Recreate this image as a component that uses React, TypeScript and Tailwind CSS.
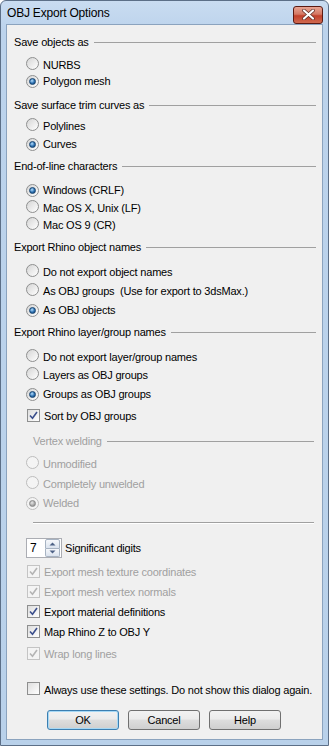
import React from 'react';

const font = { fontFamily: '"Liberation Sans", Arial, sans-serif' };

function Radio({ checked, disabled }: { checked?: boolean; disabled?: boolean }) {
  return (
    <span
      className={`inline-flex shrink-0 items-center justify-center w-[13px] h-[13px] rounded-full border ${
        disabled ? 'border-[#bdbdbd] bg-[#f4f4f4]' : 'border-[#8e8f8f] bg-[linear-gradient(135deg,#d5d5d5,#ffffff)]'
      }`}
    >
      {checked && (
        <span
          className={`w-[7px] h-[7px] rounded-full ${
            disabled
              ? 'bg-[radial-gradient(circle_at_40%_35%,#e8e8e8,#9a9a9a_70%)] border border-[#8a8a8a]'
              : 'bg-[radial-gradient(circle_at_40%_35%,#b7e0ff,#2a6fb0_55%,#123e6b)] border border-[#174470]'
          }`}
        />
      )}
    </span>
  );
}

function Check({ checked, disabled }: { checked?: boolean; disabled?: boolean }) {
  return (
    <span
      className={`inline-flex shrink-0 items-center justify-center w-[13px] h-[13px] border ${
        disabled ? 'border-[#c4c4c4] bg-[#f4f4f4]' : 'border-[#8e8f8f] bg-[linear-gradient(135deg,#dedede,#ffffff)]'
      }`}
    >
      {checked && (
        <svg width="9" height="9" viewBox="0 0 9 9">
          <path
            d="M1 4.5 L3.5 7.2 L8 1"
            fill="none"
            stroke={disabled ? '#b4b4b4' : '#3b4f8c'}
            strokeWidth="1.6"
          />
        </svg>
      )}
    </span>
  );
}

function Header({ text, mt, indent, disabled }: { text: string; mt: string; indent?: boolean; disabled?: boolean }) {
  return (
    <div className={`flex items-center h-[16px] ${mt} ${indent ? 'pl-[26px] pr-[8px]' : 'pl-[7px] pr-[6px]'}`}>
      <span className={disabled ? 'text-[#a0a0a0]' : 'text-black'}>{text}</span>
      <div className="flex-1 ml-[5px] h-px bg-[#a0a0a0]" />
    </div>
  );
}

function Row({
  label,
  mt,
  kind,
  checked,
  disabled,
}: {
  label: string;
  mt: string;
  kind: 'radio' | 'check';
  checked?: boolean;
  disabled?: boolean;
}) {
  return (
    <div className={`flex items-center h-[16px] pl-[19px] ${mt}`}>
      <span className={kind === 'check' ? 'ml-[1px]' : ''}>
        {kind === 'radio' ? <Radio checked={checked} disabled={disabled} /> : <Check checked={checked} disabled={disabled} />}
      </span>
      <span className={`ml-[4px] whitespace-pre ${disabled ? 'text-[#a0a0a0]' : 'text-black'}`}>{label}</span>
    </div>
  );
}

function Button({ label, primary }: { label: string; primary?: boolean }) {
  return (
    <div
      className={`flex items-center justify-center w-[72px] h-[20px] rounded-[3px] border ${
        primary ? 'border-[#3c7fb1] shadow-[inset_0_0_0_1px_#a6d8f5]' : 'border-[#707070]'
      } bg-[linear-gradient(#f2f2f2,#ebebeb_45%,#dddddd_50%,#cfcfcf)] text-black`}
    >
      {label}
    </div>
  );
}

export default function App() {
  return (
    <div className="w-[329px] h-[746px] bg-white" style={font}>
      <div className="w-[329px] h-[746px] flex flex-col rounded-t-[6px] border border-[#5c6f87] bg-[linear-gradient(#c9dcf1,#bcd3ec_30px,#b9d1ea)]">
        {/* title bar */}
        <div className="flex items-center h-[23px] shrink-0 pl-[6px] pr-[5px]">
          <span className="text-[12px] tracking-[-0.2px] text-black mt-[1px]">OBJ Export Options</span>
          <div className="flex-1" />
          <div className="flex items-center justify-center w-[30px] h-[18px] mt-[4px] rounded-[3px] border border-[#5b1a12] bg-[linear-gradient(#e8a493,#d47863_45%,#c2402a_55%,#d06a50)]">
            <svg width="13" height="11" viewBox="0 0 13 11">
              <path d="M2 1.5 L11 9.5 M11 1.5 L2 9.5" stroke="#5b2a22" strokeWidth="3.6" strokeLinecap="round" />
              <path d="M2 1.5 L11 9.5 M11 1.5 L2 9.5" stroke="#ffffff" strokeWidth="2.2" strokeLinecap="round" />
            </svg>
          </div>
        </div>
        {/* client area */}
        <div className="flex-1 mx-[5px] mb-[5px] border border-[#8ba3be] bg-[#f0f0f0] text-[11px] leading-[16px] tracking-[-0.2px]">
          <Header text="Save objects as" mt="mt-[9px]" />
          <Row kind="radio" label="NURBS" mt="mt-[7px]" />
          <Row kind="radio" label="Polygon mesh" mt="mt-[0px]" checked />
          <Header text="Save surface trim curves as" mt="mt-[8px]" />
          <Row kind="radio" label="Polylines" mt="mt-[5px]" />
          <Row kind="radio" label="Curves" mt="mt-[2px]" checked />
          <Header text="End-of-line characters" mt="mt-[6px]" />
          <Row kind="radio" label="Windows (CRLF)" mt="mt-[8px]" checked />
          <Row kind="radio" label="Mac OS X, Unix (LF)" mt="mt-[2px]" />
          <Row kind="radio" label="Mac OS 9 (CR)" mt="mt-[1px]" />
          <Header text="Export Rhino object names" mt="mt-[6px]" />
          <Row kind="radio" label="Do not export object names" mt="mt-[9px]" />
          <Row kind="radio" label="As OBJ groups  (Use for export to 3dsMax.)" mt="mt-[3px]" />
          <Row kind="radio" label="As OBJ objects" mt="mt-[3px]" checked />
          <Header text="Export Rhino layer/group names" mt="mt-[6px]" />
          <Row kind="radio" label="Do not export layer/group names" mt="mt-[9px]" />
          <Row kind="radio" label="Layers as OBJ groups" mt="mt-[2px]" />
          <Row kind="radio" label="Groups as OBJ groups" mt="mt-[3px]" checked />
          <Row kind="check" label="Sort by OBJ groups" mt="mt-[6px]" checked />
          <Header text="Vertex welding" mt="mt-[9px]" indent disabled />
          <Row kind="radio" label="Unmodified" mt="mt-[7px]" disabled />
          <Row kind="radio" label="Completely unwelded" mt="mt-[4px]" disabled />
          <Row kind="radio" label="Welded" mt="mt-[3px]" checked disabled />
          <div className="mt-[11px] ml-[26px] mr-[8px] h-[2px] border-t border-[#a0a0a0] border-b border-b-white" />
          {/* spinner */}
          <div className="flex items-center mt-[14px] pl-[19px] h-[20px]">
            <div className="flex items-center w-[36px] h-[20px] border border-[#abadb3] bg-white">
              <span className="flex-1 pl-[3px] text-[12px]">7</span>
              <div className="flex flex-col w-[15px] h-[18px] mr-px">
                <div className="flex-1 flex items-center justify-center border border-[#a7b3c2] rounded-t-[2px] bg-[linear-gradient(#f6f8fb,#dbe3ee)]">
                  <svg width="7" height="4" viewBox="0 0 7 4">
                    <path d="M0.5 3.5 L3.5 0.5 L6.5 3.5 Z" fill="#4d6185" />
                  </svg>
                </div>
                <div className="flex-1 flex items-center justify-center border border-t-0 border-[#a7b3c2] rounded-b-[2px] bg-[linear-gradient(#f6f8fb,#dbe3ee)]">
                  <svg width="7" height="4" viewBox="0 0 7 4">
                    <path d="M0.5 0.5 L3.5 3.5 L6.5 0.5 Z" fill="#4d6185" />
                  </svg>
                </div>
              </div>
            </div>
            <span className="ml-[3px] text-black">Significant digits</span>
          </div>
          <Row kind="check" label="Export mesh texture coordinates" mt="mt-[6px]" checked disabled />
          <Row kind="check" label="Export mesh vertex normals" mt="mt-[4px]" checked disabled />
          <Row kind="check" label="Export material definitions" mt="mt-[4px]" checked />
          <Row kind="check" label="Map Rhino Z to OBJ Y" mt="mt-[4px]" checked />
          <Row kind="check" label="Wrap long lines" mt="mt-[6px]" checked disabled />
          <Row kind="check" label="Always use these settings. Do not show this dialog again." mt="mt-[20px]" />
          <div className="flex mt-[12px] pl-[40px] gap-[9px]">
            <Button label="OK" primary />
            <Button label="Cancel" />
            <Button label="Help" />
          </div>
        </div>
      </div>
    </div>
  );
}
